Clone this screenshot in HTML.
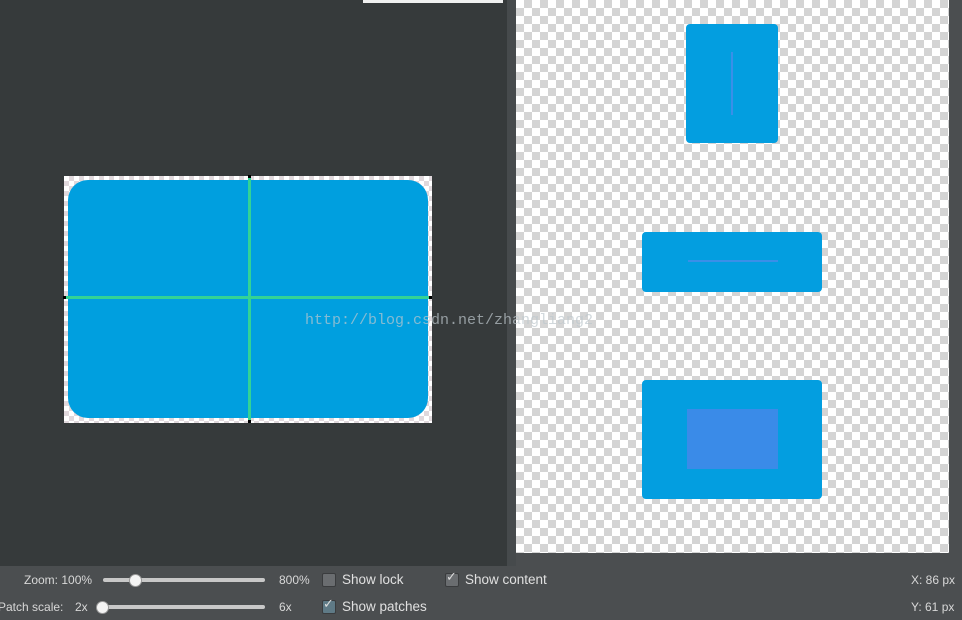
<!DOCTYPE html>
<html><head><meta charset="utf-8"><style>
html,body{margin:0;padding:0}
body{width:962px;height:620px;background:#4b4e50;position:relative;overflow:hidden;font-family:"Liberation Sans",sans-serif}
.a{position:absolute}
.chk{background-color:#fff;background-image:linear-gradient(45deg,#d4d4d4 25%,transparent 25%,transparent 75%,#d4d4d4 75%),linear-gradient(45deg,#d4d4d4 25%,transparent 25%,transparent 75%,#d4d4d4 75%);background-size:16px 16px;background-position:0 0,8px 8px}
.chk2{background-color:#fff;background-image:linear-gradient(45deg,#e0d8dc 25%,transparent 25%,transparent 75%,#e0d8dc 75%),linear-gradient(45deg,#e0d8dc 25%,transparent 25%,transparent 75%,#e0d8dc 75%);background-size:10px 10px;background-position:0 0,5px 5px}
.blue{background:#039ee0}
.lbl{color:#d8d8d8;font-size:12px}
.cb{width:12px;height:12px;background:#6a6d70;border:1px solid #3a3c3e;border-radius:2px}
.track{height:4px;background:#c8c8c8;border-radius:2px}
.knob{width:11px;height:11px;border-radius:50%;background:#f4f4f4;border:1px solid #999}
</style></head><body>
<div class="a" style="left:0;top:0;width:507px;height:566px;background:#363a3b"></div>
<div class="a" style="left:363px;top:0;width:140px;height:3px;background:#f0f0f0"></div>
<div class="a" style="left:507px;top:0;width:9px;height:566px;background:#464a4c"></div>
<div class="a chk" style="left:516px;top:0;width:433px;height:553px"></div>

<div class="a chk2" style="left:64px;top:176px;width:368px;height:247px"></div>
<div class="a blue" style="left:68px;top:180px;width:360px;height:238px;border-radius:20px;background:#009fdf"></div>
<div class="a" style="left:248px;top:178px;width:3px;height:244px;background:#33d395"></div>
<div class="a" style="left:66px;top:296px;width:364px;height:3px;background:#33d395"></div>
<div class="a" style="left:248px;top:175px;width:3px;height:3px;background:#000"></div>
<div class="a" style="left:248px;top:420px;width:3px;height:3px;background:#000"></div>
<div class="a" style="left:63px;top:296px;width:3px;height:3px;background:#000"></div>
<div class="a" style="left:429px;top:296px;width:3px;height:3px;background:#000"></div>

<div class="a blue" style="left:686px;top:24px;width:92px;height:119px;border-radius:4px"></div>
<div class="a" style="left:731px;top:52px;width:2px;height:63px;background:#3a8fe8"></div>
<div class="a blue" style="left:642px;top:232px;width:180px;height:60px;border-radius:4px"></div>
<div class="a" style="left:688px;top:260px;width:90px;height:2px;background:#3a8fe8"></div>
<div class="a blue" style="left:642px;top:380px;width:180px;height:119px;border-radius:4px"></div>
<div class="a" style="left:687px;top:409px;width:91px;height:60px;background:#3a8be8"></div>

<div class="a" style="left:305px;top:312px;font-family:'Liberation Mono',monospace;font-size:15px;color:rgba(190,200,205,.7)">http://blog.csdn.net/zhangliang2</div>

<div class="a lbl" style="left:24px;top:573px">Zoom: 100%</div>
<div class="a track" style="left:103px;top:578px;width:162px"></div>
<div class="a knob" style="left:129px;top:574px"></div>
<div class="a lbl" style="left:279px;top:573px">800%</div>
<div class="a cb" style="left:322px;top:573px"></div>
<div class="a" style="left:342px;top:572px;color:#e0e0e0;font-size:13.5px">Show lock</div>
<div class="a cb" style="left:445px;top:573px"></div>
<div class="a" style="left:446px;top:569px;color:#ddd;font-size:13px">✓</div>
<div class="a" style="left:465px;top:572px;color:#e0e0e0;font-size:13.5px">Show content</div>

<div class="a lbl" style="left:-2px;top:600px">Patch scale:</div>
<div class="a lbl" style="left:75px;top:600px">2x</div>
<div class="a track" style="left:97px;top:605px;width:168px"></div>
<div class="a knob" style="left:96px;top:601px"></div>
<div class="a lbl" style="left:279px;top:600px">6x</div>
<div class="a cb" style="left:322px;top:600px;background:#5f7a86"></div>
<div class="a" style="left:323px;top:596px;color:#ddd;font-size:13px">✓</div>
<div class="a" style="left:342px;top:599px;color:#e0e0e0;font-size:13.5px">Show patches</div>

<div class="a lbl" style="left:911px;top:573px">X: 86 px</div>
<div class="a lbl" style="left:911px;top:600px">Y: 61 px</div>
</body></html>
